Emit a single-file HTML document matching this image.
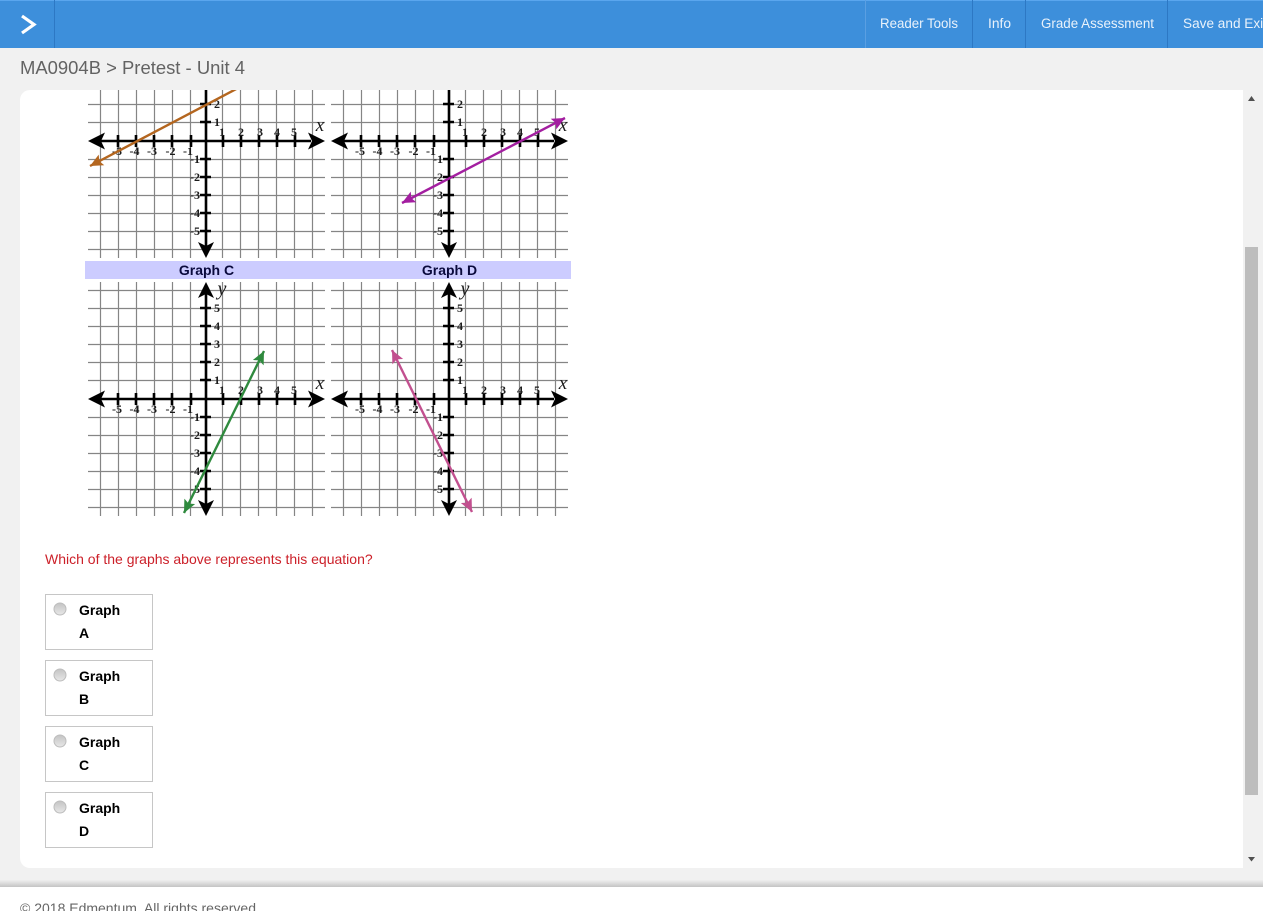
<!DOCTYPE html>
<html><head><meta charset="utf-8"><style>
html,body{margin:0;padding:0;width:1263px;height:911px;overflow:hidden;background:#f1f1f1;font-family:"Liberation Sans",sans-serif}
svg{position:absolute;left:0;top:0;display:block}
.n{text-anchor:end}
</style></head><body>
<svg width="1263" height="911" viewBox="0 0 1263 911" xmlns="http://www.w3.org/2000/svg">
<defs>
<linearGradient id="rg" x1="0" y1="0" x2="0" y2="1"><stop offset="0" stop-color="#c4c4c4"/><stop offset="1" stop-color="#e8e8e8"/></linearGradient>
<linearGradient id="fs" x1="0" y1="0" x2="0" y2="1"><stop offset="0" stop-color="#efefef"/><stop offset="1" stop-color="#c4c4c4"/></linearGradient>
<clipPath id="card"><rect x="20" y="90" width="1223" height="778"/></clipPath>
<marker id="mA" markerUnits="userSpaceOnUse" markerWidth="16" markerHeight="14" refX="13" refY="7" orient="auto-start-reverse"><path d="M13,7L0,1L2.500,7L0,13Z" fill="#b4661f"/></marker>
<marker id="mB" markerUnits="userSpaceOnUse" markerWidth="16" markerHeight="14" refX="13" refY="7" orient="auto-start-reverse"><path d="M13,7L0,1L2.500,7L0,13Z" fill="#a31ea0"/></marker>
<marker id="mC" markerUnits="userSpaceOnUse" markerWidth="16" markerHeight="14" refX="13" refY="7" orient="auto-start-reverse"><path d="M13,7L0,1L2.500,7L0,13Z" fill="#2f8a3e"/></marker>
<marker id="mD" markerUnits="userSpaceOnUse" markerWidth="16" markerHeight="14" refX="13" refY="7" orient="auto-start-reverse"><path d="M13,7L0,1L2.500,7L0,13Z" fill="#c2508f"/></marker>
<g id="gr">
<path stroke="#858585" stroke-width="1.200" fill="none" d="M-105.500,-117V117M-87.500,-117V117M-69.500,-117V117M-51.500,-117V117M-33.500,-117V117M-15.500,-117V117M16.500,-117V117M34.500,-117V117M52.500,-117V117M70.500,-117V117M88.500,-117V117M106.500,-117V117M-118,-108.500H119M-118,-90.500H119M-118,-72.500H119M-118,-54.500H119M-118,-36.500H119M-118,-18.500H119M-118,18.500H119M-118,36.500H119M-118,54.500H119M-118,72.500H119M-118,90.500H119M-118,108.500H119"/>
<path stroke="#000" stroke-width="2.600" fill="none" d="M-105,0H105M0,-105V105M-88,-6V6M-70,-6V6M-52,-6V6M-34,-6V6M-15,-6V6M17,-6V6M35,-6V6M53,-6V6M71,-6V6M89,-6V6M-6,-91H5M-6,-73H5M-6,-55H5M-6,-37H5M-6,-19H5M-6,18H5M-6,36H5M-6,54H5M-6,72H5M-6,90H5"/>
<path fill="#000" d="M-118,0L-101,-8.500L-105,0L-101,8.500ZM119,0L102,-8.500L106,0L102,8.500ZM0,117L-8,101L0,105L8,101ZM0,-117L-8,-101L0,-105L8,-101Z"/>
</g>
</defs>

<!-- header -->
<rect x="0" y="0" width="1263" height="48" fill="#3d8fdb"/>
<rect x="0" y="0" width="1263" height="1" fill="#5aa6ee"/>
<rect x="54" y="0" width="1" height="48" fill="#2d78c4"/>
<rect x="865" y="0" width="1" height="48" fill="#5a9fe2"/>
<rect x="972" y="0" width="1" height="48" fill="#2d78c4"/>
<rect x="1025" y="0" width="1" height="48" fill="#2d78c4"/>
<rect x="1167" y="0" width="1" height="48" fill="#2d78c4"/>
<path d="M22,16L34,24.500L22,33" fill="none" stroke="#fff" stroke-width="3.200"/>
<g fill="#e9f2fb" font-size="13.500" font-family="'Liberation Sans',sans-serif">
<text x="880" y="28" textLength="78" lengthAdjust="spacingAndGlyphs">Reader Tools</text>
<text x="988" y="28" textLength="23" lengthAdjust="spacingAndGlyphs">Info</text>
<text x="1041" y="28" textLength="113" lengthAdjust="spacingAndGlyphs">Grade Assessment</text>
<text x="1183" y="28" textLength="84" lengthAdjust="spacingAndGlyphs">Save and Exit</text>
</g>
<text x="20" y="74" font-size="18" fill="#636363" textLength="225" lengthAdjust="spacingAndGlyphs">MA0904B &gt; Pretest - Unit 4</text>

<!-- card -->
<path d="M30,90H1243V868H30A10,10 0 0 1 20,858V100A10,10 0 0 1 30,90Z" fill="#fff"/>

<!-- scrollbar -->
<rect x="1243" y="90" width="20" height="778" fill="#f1f1f1"/>
<rect x="1245" y="247" width="13" height="548" fill="#bdbdbd"/>
<path d="M1251.500,96L1255,101H1248ZM1251.500,861.500L1248,857H1255Z" fill="#505050"/>

<rect x="85" y="261" width="486" height="18" fill="#ccccff"/>
<g font-size="14" font-weight="bold" fill="#0a0a3c" text-anchor="middle">
<text x="206.500" y="275">Graph C</text>
<text x="449.500" y="275">Graph D</text>
</g>

<g clip-path="url(#card)" font-family="'Liberation Serif',serif" font-weight="bold" font-size="12" fill="#1c1c1c" text-anchor="middle">
<!-- Graph A -->
<g transform="translate(206,141)">
<use href="#gr"/>
<text x="-89" y="14">-5</text><text x="-71.500" y="14">-4</text><text x="-54" y="14">-3</text><text x="-35.500" y="14">-2</text><text x="-18" y="14">-1</text>
<text x="16" y="-5">1</text><text x="35" y="-5">2</text><text x="54" y="-5">3</text><text x="71" y="-5">4</text><text x="88" y="-5">5</text>
<text x="11" y="-33">2</text><text x="11" y="-15">1</text>
<text class="n" x="-6" y="22">-1</text><text class="n" x="-6" y="40">-2</text><text class="n" x="-6" y="58">-3</text><text class="n" x="-6" y="76">-4</text><text class="n" x="-6" y="94">-5</text>
<text x="114" y="-10" font-size="19" font-weight="normal" font-style="italic">x</text>
</g>
<!-- Graph B -->
<g transform="translate(449,141)">
<use href="#gr"/>
<text x="-89" y="14">-5</text><text x="-71.500" y="14">-4</text><text x="-54" y="14">-3</text><text x="-35.500" y="14">-2</text><text x="-18" y="14">-1</text>
<text x="16" y="-5">1</text><text x="35" y="-5">2</text><text x="54" y="-5">3</text><text x="71" y="-5">4</text><text x="88" y="-5">5</text>
<text x="11" y="-33">2</text><text x="11" y="-15">1</text>
<text class="n" x="-6" y="22">-1</text><text class="n" x="-6" y="40">-2</text><text class="n" x="-6" y="58">-3</text><text class="n" x="-6" y="76">-4</text><text class="n" x="-6" y="94">-5</text>
<text x="114" y="-10" font-size="19" font-weight="normal" font-style="italic">x</text>
</g>
<!-- Graph C -->
<g transform="translate(206,399)">
<use href="#gr"/>
<text x="-89" y="14">-5</text><text x="-71.500" y="14">-4</text><text x="-54" y="14">-3</text><text x="-35.500" y="14">-2</text><text x="-18" y="14">-1</text>
<text x="16" y="-5">1</text><text x="35" y="-5">2</text><text x="54" y="-5">3</text><text x="71" y="-5">4</text><text x="88" y="-5">5</text>
<text x="11" y="-87">5</text><text x="11" y="-69">4</text><text x="11" y="-51">3</text><text x="11" y="-33">2</text><text x="11" y="-15">1</text>
<text class="n" x="-6" y="22">-1</text><text class="n" x="-6" y="40">-2</text><text class="n" x="-6" y="58">-3</text><text class="n" x="-6" y="76">-4</text><text class="n" x="-6" y="94">-5</text>
<text x="114" y="-10" font-size="19" font-weight="normal" font-style="italic">x</text>
<text x="16" y="-104" font-size="20" font-weight="normal" font-style="italic">y</text>
</g>
<!-- Graph D -->
<g transform="translate(449,399)">
<use href="#gr"/>
<text x="-89" y="14">-5</text><text x="-71.500" y="14">-4</text><text x="-54" y="14">-3</text><text x="-35.500" y="14">-2</text><text x="-18" y="14">-1</text>
<text x="16" y="-5">1</text><text x="35" y="-5">2</text><text x="54" y="-5">3</text><text x="71" y="-5">4</text><text x="88" y="-5">5</text>
<text x="11" y="-87">5</text><text x="11" y="-69">4</text><text x="11" y="-51">3</text><text x="11" y="-33">2</text><text x="11" y="-15">1</text>
<text class="n" x="-6" y="22">-1</text><text class="n" x="-6" y="40">-2</text><text class="n" x="-6" y="58">-3</text><text class="n" x="-6" y="76">-4</text><text class="n" x="-6" y="94">-5</text>
<text x="114" y="-10" font-size="19" font-weight="normal" font-style="italic">x</text>
<text x="16" y="-104" font-size="20" font-weight="normal" font-style="italic">y</text>
</g>
<!-- lines -->
<line x1="90" y1="166" x2="240" y2="87" stroke="#b4661f" stroke-width="2.400" marker-start="url(#mA)"/>
<line x1="402" y1="203" x2="565" y2="118" stroke="#a31ea0" stroke-width="2.400" marker-start="url(#mB)" marker-end="url(#mB)"/>
<line x1="184" y1="513" x2="264" y2="351" stroke="#2f8a3e" stroke-width="2.400" marker-start="url(#mC)" marker-end="url(#mC)"/>
<line x1="392" y1="350" x2="472" y2="512" stroke="#c2508f" stroke-width="2.400" marker-start="url(#mD)" marker-end="url(#mD)"/>
</g>

<text x="45" y="564" font-size="14" fill="#cc2029">Which of the graphs above represents this equation?</text>

<g fill="#fff" stroke="#c6c6c6" stroke-width="1" shape-rendering="crispEdges">
<rect x="45.500" y="594.500" width="107" height="55"/>
<rect x="45.500" y="660.500" width="107" height="55"/>
<rect x="45.500" y="726.500" width="107" height="55"/>
<rect x="45.500" y="792.500" width="107" height="55"/>
</g>
<g fill="url(#rg)" stroke="#bdbdbd" stroke-width="1">
<circle cx="60" cy="609" r="6"/>
<circle cx="60" cy="675" r="6"/>
<circle cx="60" cy="741" r="6"/>
<circle cx="60" cy="807" r="6"/>
</g>
<g font-size="14" font-weight="bold" fill="#000">
<text x="79" y="615">Graph</text><text x="79" y="638">A</text>
<text x="79" y="681">Graph</text><text x="79" y="704">B</text>
<text x="79" y="747">Graph</text><text x="79" y="770">C</text>
<text x="79" y="813">Graph</text><text x="79" y="836">D</text>
</g>

<!-- footer -->
<rect x="0" y="880" width="1263" height="7" fill="url(#fs)"/>
<rect x="0" y="887" width="1263" height="24" fill="#fff"/>
<text x="20" y="913" font-size="14" fill="#666">© 2018 Edmentum. All rights reserved.</text>
</svg>
</body></html>
